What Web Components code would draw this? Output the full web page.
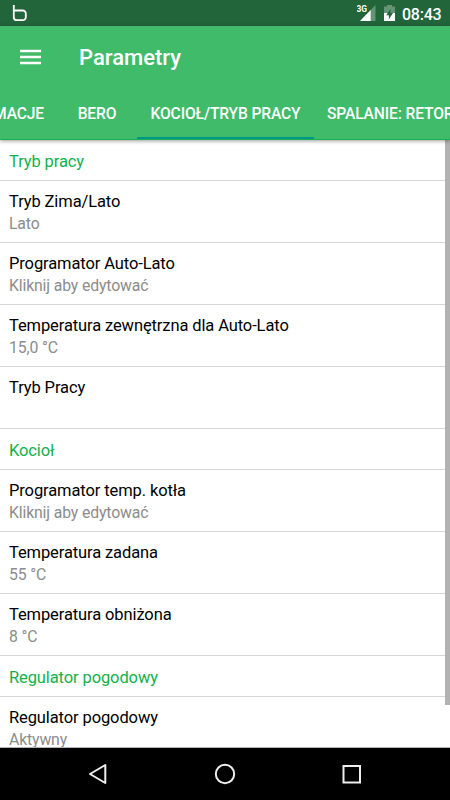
<!DOCTYPE html>
<html lang="pl">
<head>
<meta charset="utf-8">
<title>Parametry</title>
<style>
html, body { margin: 0; height: 100%; overflow: hidden; }
body { font-family: Roboto, sans-serif; }
</style>
</head>
<body>
<params-screen></params-screen>
<script>
const define = (name, html) => customElements.define(name, class extends HTMLElement {
  constructor() {
    super();
    const t = document.createElement('template');
    t.innerHTML = html;
    this.attachShadow({ mode: 'open' }).append(t.content.cloneNode(true));
  }
});

define('status-bar', `
<style>
:host { display: flex; align-items: center; height: 26px; box-sizing: border-box; padding: 0 9px 0 12px; background: #22653a; color: #fff; }
svg { display: block; flex: none; }
.space { flex: 1; }
.net { margin-right: 8px; }
.bat { margin-right: 7px; }
time { font-size: 16px; line-height: 25px; font-weight: 500; width: 39px; letter-spacing: -0.25px; white-space: nowrap; padding-top: 3px; }
</style>
<svg width="16" height="26" viewBox="0 0 16 26"><path d="M1.8 5v12.2a3 3 0 0 0 3 3h6a3 3 0 0 0 3-3v-3.7a3 3 0 0 0-3-3H2" fill="none" stroke="#fff" stroke-width="1.8"/></svg>
<span class="space"></span>
<svg class="net" width="19" height="26" viewBox="0 0 19 26"><path d="M18.5 5v16H3z" fill="#fff" opacity=".3"/><path d="M13.7 9.9V21H3z" fill="#fff"/><text x="-.6" y="12.3" font-size="9.6" font-weight="700" fill="#fff" textLength="10.5" lengthAdjust="spacingAndGlyphs">3G</text></svg>
<svg class="bat" width="11" height="26" viewBox="0 0 11 26"><path d="M0 6.5h3V5h5v1.5h3V13H0z" fill="#fff" opacity=".3"/><path d="M0 13h11v8H0z" fill="#fff"/><path d="M6.5 9 2.2 15.3h2.7v4L9 13H6.5z" fill="#22653a"/></svg>
<time>08:43</time>`);

define('app-toolbar', `
<style>
:host { display: flex; align-items: center; height: 64px; padding-left: 20px; color: #fff; }
svg { display: block; margin: -2px 38px 0 0; }
h1 { margin: 0; font-size: 22px; font-weight: 500; line-height: 64px; }
</style>
<svg width="21" height="16" viewBox="0 0 21 16"><path d="M0 2h21M0 8h21M0 14h21" stroke="#fff" stroke-width="2.3"/></svg>
<h1><slot></slot></h1>`);

define('tab-item', `
<style>
:host { display: block; flex: none; box-sizing: border-box; height: 49px; padding: 0 13px; line-height: 49px; font-size: 15.6px; letter-spacing: -0.13px; font-weight: 500; color: #fff; white-space: nowrap; text-align: center; min-width: 80px; border-bottom: 2px solid transparent; }
:host([selected]) { border-color: #009688; }
</style><slot></slot>`);

define('tab-strip', `
<style>
:host { display: flex; height: 50px; box-sizing: border-box; border-bottom: 1px solid #15b153; overflow: hidden; }
.before { display: flex; justify-content: flex-end; width: 137px; flex: none; overflow: hidden; }
</style><div class="before"><slot name="before"></slot></div><slot></slot>`);

define('section-title', `
<style>
:host { display: block; height: 40px; line-height: 43px; padding-left: 9px; font-size: 16.5px; letter-spacing: -0.11px; color: #12b14b; border-bottom: 1px solid #d6d6d6; white-space: nowrap; }
</style><slot></slot>`);

define('param-row', `
<style>
:host { display: block; height: 51px; border-bottom: 1px solid #d6d6d6; padding: 10px 9px 0; white-space: nowrap; }
.name { font-size: 16.5px; letter-spacing: -0.11px; line-height: 22px; color: #000; }
.value { font-size: 15.8px; letter-spacing: -0.14px; line-height: 22px; color: #8c8c8c; }
</style>
<div class="name"><slot></slot></div><div class="value"><slot name="value"></slot></div>`);

define('nav-bar', `
<style>
:host { display: flex; height: 52px; background: #000; align-items: center; justify-content: center; gap: 103px; }
svg { display: block; width: 24px; height: 24px; fill: none; stroke: #eee; stroke-width: 2; }
</style>
<svg viewBox="0 0 24 24"><path d="M19.3 3v18L4 12z" stroke-linejoin="round"/></svg>
<svg viewBox="0 0 24 24"><circle cx="12" cy="12" r="9.2"/></svg>
<svg viewBox="0 0 24 24"><path d="M3.5 4h16.5v16.5H3.5z"/></svg>`);

define('params-screen', `
<style>
:host { display: flex; flex-direction: column; width: 450px; height: 800px; background: #fff; }
header { background: #3fbb69; box-shadow: 0 1px 4px rgba(0,0,0,.4); z-index: 1; position: relative; flex: none; }
main { flex: 1; min-height: 0; overflow: hidden; position: relative; }
.thumb { position: absolute; right: 0; top: 0; width: 5px; height: 565px; background: #b2b2b2; }
footer { border-top: 1px solid #b2b2b2; }
.selected { width: 177px; }
</style>
<status-bar></status-bar>
<header>
<app-toolbar>Parametry</app-toolbar>
<tab-strip>
<tab-item slot="before">INFORMACJE</tab-item><tab-item slot="before">BERO</tab-item><tab-item class="selected" selected>KOCIOŁ/TRYB PRACY</tab-item><tab-item>SPALANIE: RETORTA</tab-item>
</tab-strip>
</header>
<main>
<section-title>Tryb pracy</section-title>
<param-row>Tryb Zima/Lato<span slot="value">Lato</span></param-row>
<param-row>Programator Auto-Lato<span slot="value">Kliknij aby edytować</span></param-row>
<param-row>Temperatura zewnętrzna dla Auto-Lato<span slot="value">15,0 °C</span></param-row>
<param-row>Tryb Pracy</param-row>
<section-title>Kocioł</section-title>
<param-row>Programator temp. kotła<span slot="value">Kliknij aby edytować</span></param-row>
<param-row>Temperatura zadana<span slot="value">55 °C</span></param-row>
<param-row>Temperatura obniżona<span slot="value">8 °C</span></param-row>
<section-title>Regulator pogodowy</section-title>
<param-row>Regulator pogodowy<span slot="value">Aktywny</span></param-row>
<div class="thumb"></div>
</main>
<footer><nav-bar></nav-bar></footer>`);
</script>
</body>
</html>
